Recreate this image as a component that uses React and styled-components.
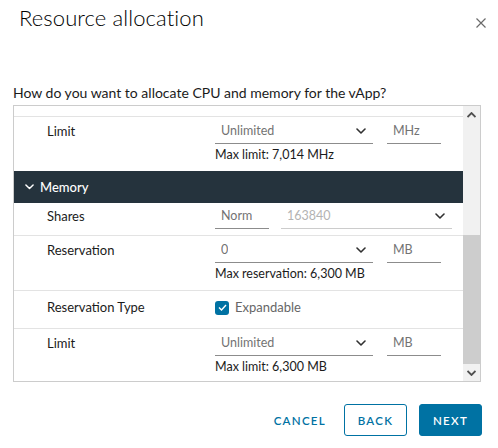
import React from 'react';
import styled, { createGlobalStyle } from 'styled-components';

const GlobalStyle = createGlobalStyle`
  html, body {
    margin: 0;
    padding: 0;
    background: #fff;
  }
  body {
    font-family: Lato, "Open Sans", sans-serif;
    color: #1b1b1b;
  }
  * {
    box-sizing: border-box;
  }
`;

const Modal = styled.div`
  width: 498px;
  height: 448px;
  background: #fff;
  display: flex;
  flex-direction: column;
`;

const Header = styled.div`
  display: flex;
  justify-content: space-between;
  align-items: flex-start;
  padding: 4px 11px 0 19px;
  height: 40px;
`;

const Title = styled.h1`
  margin: 0;
  font-size: 22px;
  font-weight: 300;
  line-height: 28px;
  color: #000;
  letter-spacing: 0.1px;
`;

const CloseButton = styled.button`
  border: 0;
  background: none;
  padding: 0;
  margin-top: 13px;
  width: 12px;
  height: 12px;
  display: flex;
  cursor: pointer;
`;

const Question = styled.p`
  margin: 44px 0 0 13px;
  font-size: 14px;
  line-height: 18px;
  color: #1b1b1b;
`;

const ScrollBox = styled.div`
  margin: 3px 0 0 13px;
  width: 468px;
  height: 277px;
  border: 1px solid #ccc;
  display: flex;
  overflow: hidden;
`;

const Content = styled.div`
  flex: 1;
  overflow: hidden;
  display: flex;
  flex-direction: column;
`;

const RowTail = styled.div`
  height: 11px;
  flex: none;
  border-bottom: 1px solid #e3e3e3;
`;

const Row = styled.div`
  flex: none;
  display: grid;
  grid-template-columns: 201px 1fr;
  padding: ${(p) => p.$pad || '2px 0 8px'};
  border-bottom: ${(p) => (p.$last ? '0' : '1px solid #e3e3e3')};
`;

const Label = styled.div`
  padding-left: 33px;
  font-size: 13px;
  line-height: ${(p) => (p.$check ? '21px' : '25px')};
  color: #1b1b1b;
`;

const Controls = styled.div`
  display: flex;
  flex-direction: column;
`;

const FieldLine = styled.div`
  display: flex;
  gap: ${(p) => p.$gap || 14}px;
`;

const Field = styled.div`
  width: ${(p) => p.$w}px;
  height: 25px;
  border-bottom: 1px solid ${(p) => (p.$disabled ? '#ccc' : '#8c8c8c')};
  display: flex;
  align-items: center;
  justify-content: space-between;
  padding: 0 7px 1px 6px;
  font-size: 12.5px;
  color: ${(p) => (p.$disabled ? '#b3b3b3' : '#737373')};
  white-space: nowrap;
`;

const FieldText = styled.span`
  display: block;
  overflow: hidden;
  flex: ${(p) => (p.$clip ? `0 0 ${p.$clip}px` : '0 1 auto')};
`;

const Helper = styled.div`
  font-size: 12.5px;
  line-height: 16px;
  margin-top: 3px;
  color: #1b1b1b;
`;

const SectionHeader = styled.div`
  flex: none;
  height: 32px;
  background: #25333d;
  color: #fff;
  display: flex;
  align-items: center;
  gap: 6px;
  padding-left: 11px;
  font-size: 13px;
  font-weight: 500;
`;

const CheckWrap = styled.label`
  display: flex;
  align-items: center;
  gap: 6px;
  font-size: 13px;
  color: #666;
  line-height: 21px;
`;

const CheckBox = styled.span`
  width: 14px;
  height: 14px;
  border-radius: 3px;
  background: #0072a3;
  display: flex;
  align-items: center;
  justify-content: center;
`;

const Scrollbar = styled.div`
  width: 17px;
  flex: none;
  background: #f1f1f1;
  display: flex;
  flex-direction: column;
`;

const ArrowBtn = styled.div`
  height: 17px;
  flex: none;
  display: flex;
  align-items: center;
  justify-content: center;
`;

const Track = styled.div`
  flex: 1;
  display: flex;
  flex-direction: column;
  justify-content: flex-end;
`;

const Thumb = styled.div`
  height: 129px;
  background: #cdcdcd;
`;

const Footer = styled.div`
  display: flex;
  justify-content: flex-end;
  align-items: center;
  gap: 12px;
  padding: 22px 16px 0 0;
`;

const Button = styled.button`
  height: 32px;
  min-width: 63px;
  padding: 0 12px;
  border-radius: 3px;
  font-family: Lato, "Open Sans", sans-serif;
  font-size: 11.5px;
  font-weight: 600;
  letter-spacing: 1.3px;
  cursor: pointer;
  border: 1px solid ${(p) => (p.$variant === 'link' ? 'transparent' : '#0072a3')};
  background: ${(p) => (p.$variant === 'primary' ? '#0072a3' : 'transparent')};
  color: ${(p) => (p.$variant === 'primary' ? '#fff' : '#0072a3')};
  margin-right: ${(p) => (p.$variant === 'link' ? '-7px' : '0')};
`;

const Chevron = ({ color = '#313131', size = 10 }) => (
  <svg width={size} height={size * 0.6} viewBox="0 0 10 6">
    <path d="M1 1 L5 5 L9 1" fill="none" stroke={color} strokeWidth="1.6" strokeLinecap="round" strokeLinejoin="round" />
  </svg>
);

const ScrollArrow = ({ up }) => (
  <svg width="9" height="6" viewBox="0 0 9 6">
    <path
      d={up ? 'M0.5 5 L4.5 1 L8.5 5' : 'M0.5 1 L4.5 5 L8.5 1'}
      fill="none"
      stroke="#505050"
      strokeWidth="1.8"
    />
  </svg>
);

const SelectField = ({ value, w, disabled }) => (
  <Field $w={w} $disabled={disabled}>
    <FieldText>{value}</FieldText>
    <Chevron />
  </Field>
);

const LimitRow = ({ label, value, unit, helper, last }) => (
  <Row $last={last}>
    <Label>{label}</Label>
    <Controls>
      <FieldLine>
        <SelectField value={value} w={158} />
        <Field $w={54}>{unit}</Field>
      </FieldLine>
      <Helper>{helper}</Helper>
    </Controls>
  </Row>
);

const App = () => {
  return (
    <>
      <GlobalStyle />
      <Modal>
        <Header>
          <Title>Resource allocation</Title>
          <CloseButton aria-label="Close">
            <svg width="12" height="12" viewBox="0 0 12 12">
              <path d="M1.5 1.5 L10.5 10.5 M10.5 1.5 L1.5 10.5" stroke="#6a6a6a" strokeWidth="1.2" />
            </svg>
          </CloseButton>
        </Header>
        <Question>How do you want to allocate CPU and memory for the vApp?</Question>
        <ScrollBox>
          <Content>
            <RowTail />
            <LimitRow label="Limit" value="Unlimited" unit="MHz" helper="Max limit: 7,014 MHz" last />
            <SectionHeader>
              <Chevron color="#fff" size={9} />
              Memory
            </SectionHeader>
            <Row $pad="1px 0 6px">
              <Label>Shares</Label>
              <Controls>
                <FieldLine $gap={12}>
                  <Field $w={54}>
                    <FieldText $clip={31}>Normal</FieldText>
                  </Field>
                  <SelectField value="163840" w={171} disabled />
                </FieldLine>
              </Controls>
            </Row>
            <LimitRow label="Reservation" value="0" unit="MB" helper="Max reservation: 6,300 MB" />
            <Row $pad="6px 0 10px">
              <Label $check>Reservation Type</Label>
              <CheckWrap>
                <CheckBox>
                  <svg width="9" height="7" viewBox="0 0 9 7">
                    <path d="M1 3.5 L3.5 6 L8 1" fill="none" stroke="#fff" strokeWidth="1.4" />
                  </svg>
                </CheckBox>
                Expandable
              </CheckWrap>
            </Row>
            <LimitRow label="Limit" value="Unlimited" unit="MB" helper="Max limit: 6,300 MB" last />
          </Content>
          <Scrollbar>
            <ArrowBtn>
              <ScrollArrow up />
            </ArrowBtn>
            <Track>
              <Thumb />
            </Track>
            <ArrowBtn>
              <ScrollArrow />
            </ArrowBtn>
          </Scrollbar>
        </ScrollBox>
        <Footer>
          <Button $variant="link">CANCEL</Button>
          <Button $variant="outline">BACK</Button>
          <Button $variant="primary">NEXT</Button>
        </Footer>
      </Modal>
    </>
  );
};

export default App;
